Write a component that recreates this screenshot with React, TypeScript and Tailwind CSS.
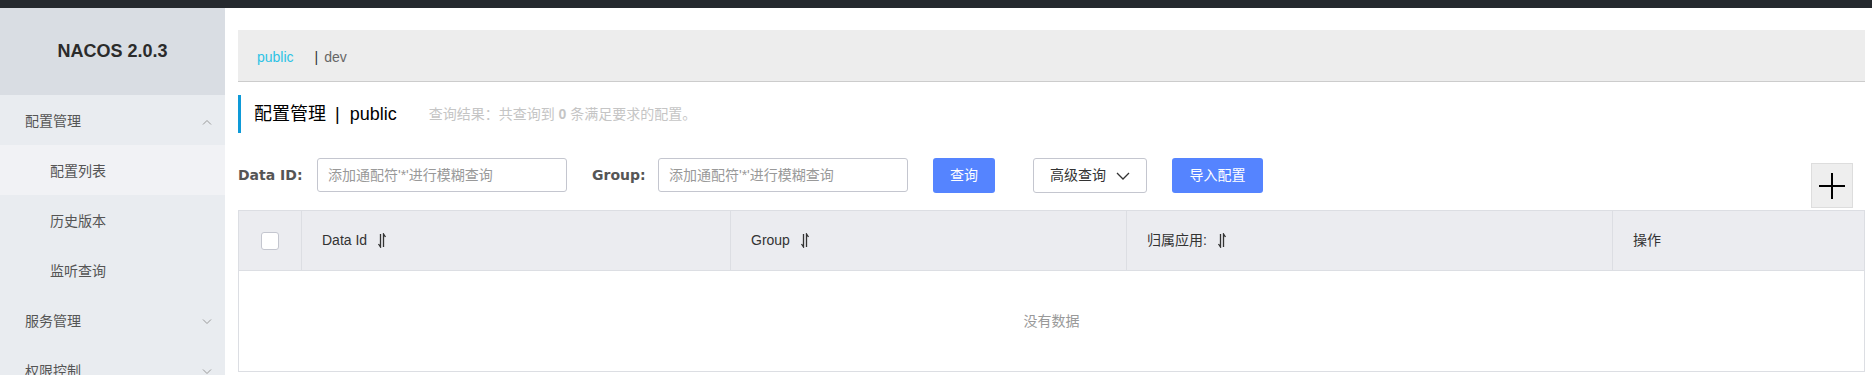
import { ReactNode } from 'react'

function Chevron({ up = false, className = '' }: { up?: boolean; className?: string }) {
  return (
    <svg width="10" height="6" viewBox="0 0 10 6" className={className} fill="none">
      {up ? (
        <polyline points="1,5.5 5,1.5 9,5.5" stroke="currentColor" strokeWidth="1" />
      ) : (
        <polyline points="1,0.5 5,4.5 9,0.5" stroke="currentColor" strokeWidth="1" />
      )}
    </svg>
  )
}

function SortIcon() {
  return (
    <svg width="10" height="15" viewBox="0 0 10 15" className="ml-[10px] text-[#333]" fill="none">
      {/* down harpoon on the left, up harpoon on the right */}
      <path d="M3.5 1 V14 L1.5 11" stroke="currentColor" strokeWidth="1.3" />
      <path d="M6.5 14 V1 L8.5 4" stroke="currentColor" strokeWidth="1.3" />
    </svg>
  )
}

function MenuItem({
  label,
  sub = false,
  active = false,
  arrow,
}: {
  label: string
  sub?: boolean
  active?: boolean
  arrow?: 'up' | 'down'
}) {
  return (
    <div
      className={`flex h-[50px] shrink-0 items-center justify-between pr-[13px] pt-[3px] ${
        sub ? 'pl-[50px]' : 'pl-[25px]'
      } ${active ? 'bg-[#f1f2f5]' : ''}`}
    >
      <span className="text-[14px] text-[#555]">{label}</span>
      {arrow && <Chevron up={arrow === 'up'} className="text-[#999]" />}
    </div>
  )
}

function Sidebar() {
  return (
    <aside className="flex w-[225px] shrink-0 flex-col overflow-hidden bg-[#e9ecf0]">
      <div className="flex h-[87px] shrink-0 items-center justify-center bg-[#d9dde3]">
        <span className="text-[18px] font-bold text-[#2b2b2b]">NACOS 2.0.3</span>
      </div>
      <MenuItem label="配置管理" arrow="up" />
      <MenuItem label="配置列表" sub active />
      <MenuItem label="历史版本" sub />
      <MenuItem label="监听查询" sub />
      <MenuItem label="服务管理" arrow="down" />
      <MenuItem label="权限控制" arrow="down" />
      <MenuItem label="命名空间" />
    </aside>
  )
}

function Field({ label, labelWidth }: { label: string; labelWidth: string }) {
  return (
    <div className="flex items-center">
      <span
        className={`${labelWidth} font-['DejaVu_Sans',sans-serif] text-[14px] font-bold text-[#555]`}
      >
        {label}
      </span>
      <input
        className="h-[34px] w-[250px] rounded-[3px] border border-[#c4c6cf] px-[10px] text-[14px] text-[#333] outline-none placeholder:text-[#999]"
        placeholder="添加通配符'*'进行模糊查询"
      />
    </div>
  )
}

function HeadCell({ children, className = '' }: { children?: ReactNode; className?: string }) {
  return (
    <div className={`flex h-full items-center border-r border-[#dcdee3] pl-[20px] text-[14px] text-[#333] ${className}`}>
      {children}
    </div>
  )
}

export default function App() {
  return (
    <div className="flex h-[375px] flex-col overflow-hidden bg-white font-['Liberation_Sans','Noto_Sans_CJK_SC',sans-serif] text-[14px]">
      <div className="h-2 shrink-0 bg-[#25292e]" />
      <div className="flex min-h-0 flex-1">
        <Sidebar />

        <main className="flex min-w-0 flex-1 flex-col pl-[13px] pr-[7px] pt-[22px]">
          {/* Namespace tabs */}
          <div className="flex h-[52px] shrink-0 items-center border-b border-[#ccc] bg-[#ededed] pl-[19px] pt-[3px] text-[14px]">
            <span className="text-[#2cc3e5]">public</span>
            <span className="ml-[21px] text-[#333]">|</span>
            <span className="ml-[6px] text-[#666]">dev</span>
          </div>

          {/* Page title */}
          <div className="mt-[13px] flex h-[38px] shrink-0 items-center border-l-[3px] border-[#0e9ad8] pl-[13px]">
            <span className="text-[18px] text-black">配置管理</span>
            <span className="ml-[9px] text-[18px] text-black">|</span>
            <span className="ml-[10px] text-[18px] text-black">public</span>
            <span className="ml-[32px] text-[14px] text-[#c5c5c5]">
              查询结果：共查询到 <strong className="font-bold">0</strong> 条满足要求的配置。
            </span>
          </div>

          {/* Search row */}
          <div className="mt-[25px] flex h-[50px] shrink-0 items-start">
            <Field label="Data ID:" labelWidth="w-[79px]" />
            <div className="ml-[25px]">
              <Field label="Group:" labelWidth="w-[66px]" />
            </div>
            <button className="ml-[25px] h-[35px] w-[62px] rounded-[3px] bg-[#5584ff] text-[14px] text-white">
              查询
            </button>
            <button className="ml-[38px] flex h-[35px] w-[114px] items-center justify-center gap-[10px] rounded-[3px] border border-[#c4c6cf] bg-white text-[14px] text-[#333]">
              高级查询
              <svg width="14" height="8" viewBox="0 0 14 8" fill="none">
                <polyline points="1,1 7,7 13,1" stroke="#333" strokeWidth="1.3" />
              </svg>
            </button>
            <button className="ml-[25px] h-[35px] w-[91px] rounded-[3px] bg-[#5584ff] text-[14px] text-white">
              导入配置
            </button>
            <button className="ml-auto mr-[12px] mt-[5px] flex h-[45px] w-[42px] items-center justify-center border border-[#ddd] bg-[#eee]">
              <svg width="26" height="26" viewBox="0 0 26 26" fill="none">
                <path d="M13 0 V26 M0 13 H26" stroke="#000" strokeWidth="2" />
              </svg>
            </button>
          </div>

          {/* Table */}
          <div className="mt-[2px] shrink-0 border border-[#dcdee3]">
            <div className="grid h-[60px] grid-cols-[63px_429px_396px_486px_1fr] border-b border-[#dcdee3] bg-[#ebecf0]">
              <div className="flex h-full items-center justify-center border-r border-[#dcdee3]">
                <span className="h-[18px] w-[18px] rounded-[3px] border border-[#c4c6cf] bg-white" />
              </div>
              <HeadCell>
                Data Id
                <SortIcon />
              </HeadCell>
              <HeadCell>
                Group
                <SortIcon />
              </HeadCell>
              <HeadCell>
                归属应用:
                <SortIcon />
              </HeadCell>
              <HeadCell className="border-r-0">操作</HeadCell>
            </div>
            <div className="flex h-[100px] items-center justify-center text-[14px] text-[#999]">没有数据</div>
          </div>
        </main>
      </div>
    </div>
  )
}
